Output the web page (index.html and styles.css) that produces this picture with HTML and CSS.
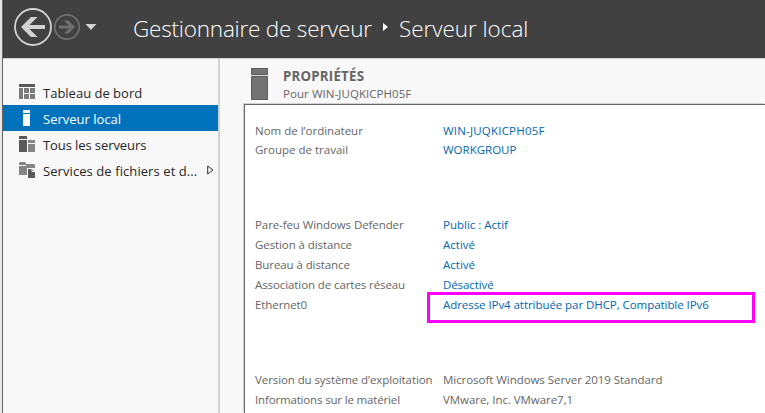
FILE: index.html
```html
<!DOCTYPE html>
<html lang="fr">
<head>
<meta charset="utf-8">
<title>Gestionnaire de serveur</title>
<link rel="stylesheet" href="styles.css">
</head>
<body>
<div class="window">
  <header class="header">
    <svg class="nav" width="98" height="58" viewBox="0 0 98 58">
      <circle cx="30" cy="27" r="18" fill="none" stroke="#d2d2d2" stroke-width="1.8"/>
      <path d="M18 27 L28 17 H34.5 L26.5 25 H42 V29 H26.5 L34.5 37 H28 Z" fill="#d2d2d2"/>
      <circle cx="64" cy="27" r="12.2" fill="none" stroke="#707070" stroke-width="1.7"/>
      <path d="M72 27 L65.5 20.5 H61 L66 25.5 H56 V28.5 H66 L61 33.5 H65.5 Z" fill="#707070"/>
      <path d="M82.5 24 H93.5 L88 30 Z" fill="#d2d2d2"/>
    </svg>
    <h1 class="title"><span class="crumb app">Gestionnaire de serveur</span><svg class="sep" width="5" height="8" viewBox="0 0 5 8"><path d="M0 0 L5 4 L0 8 Z" fill="#fff"/></svg><span class="crumb page">Serveur local</span></h1>
  </header>
  <div class="body">
    <nav class="sidebar">
      <a class="item"><svg width="16" height="16" viewBox="0 0 16 16"><path d="M0 0H16V3H0Z" fill="#595959"/><path d="M0 4H4V15H0ZM5 4H10V9H5ZM11 4H16V9H11ZM5 10H10V15H5ZM11 10H16V15H11Z" fill="#7b7b7b"/></svg><span>Tableau de bord</span></a>
      <a class="item active"><svg width="16" height="16" viewBox="0 0 16 16"><path d="M4 0H11V3H4ZM4 4H11V16H4Z" fill="#fff"/></svg><span>Serveur local</span></a>
      <a class="item"><svg width="16" height="16" viewBox="0 0 16 16"><path d="M0 0H8V3H0ZM0 4H8V16H0Z" fill="#595959"/><path d="M9 4H16V7H9ZM9 8H16V16H9Z" fill="#858585"/></svg><span class="snug">Tous les serveurs</span></a>
      <a class="item"><svg width="16" height="16" viewBox="0 0 16 16"><path d="M0 1L1 0H6L7 1V3H0ZM0 4H7V2H15L16 3V6H8V13H0Z" fill="#858585"/><path d="M9 7H13L16 10V16H9Z" fill="#595959"/><path d="M13 6.5V9.5H16" fill="none" stroke="#f8f8f8"/></svg><span class="services">Services de fichiers et d...</span><svg class="expand" width="7" height="10" viewBox="0 0 7 10"><path d="M.7 1 L6 5 L.7 9 Z" fill="none" stroke="#333"/></svg></a>
    </nav>
    <main class="main">
      <div class="heading">
        <svg width="17" height="32" viewBox="0 0 17 32"><path d="M.5 .5H16.5V6.5H.5ZM.5 8.5H16.5V31.5H.5Z" fill="#737373" stroke="#5c5c5c"/><path d="M0 7.5H17" stroke="#d8d8d8"/></svg>
        <div class="labels"><h2>PROPRIÉTÉS</h2><p class="host">Pour WIN-JUQKICPH05F</p></div>
      </div>
      <section class="panel">
        <dl class="group tight">
          <dt>Nom de l’ordinateur</dt><dd class="link wide">WIN-JUQKICPH05F</dd>
          <dt>Groupe de travail</dt><dd class="link">WORKGROUP</dd>
        </dl>
        <dl class="group">
          <dt class="snug">Pare-feu Windows Defender</dt><dd class="link">Public : Actif</dd>
          <dt class="snug">Gestion à distance</dt><dd class="link">Activé</dd>
          <dt class="snug">Bureau à distance</dt><dd class="link">Activé</dd>
          <dt class="snug">Association de cartes réseau</dt><dd class="link snug">Désactivé</dd>
          <dt class="snug">Ethernet0</dt><dd class="link marked">Adresse IPv4 attribuée par DHCP, Compatible IPv6</dd>
        </dl>
        <dl class="group">
          <dt class="snug">Version du système d’exploitation</dt><dd class="product">Microsoft Windows Server 2019 Standard</dd>
          <dt class="hardware">Informations sur le matériel</dt><dd class="product">VMware, Inc. VMware7,1</dd>
        </dl>
      </section>
    </main>
  </div>
</div>
</body>
</html>
```
FILE: styles.css
```css
*, *::after { box-sizing: border-box; }
body { margin: 0; overflow: hidden; background: #e8e8e8; font-family: "Open Sans", "Noto Sans", sans-serif; }
h1, h2, p, dl, dd { margin: 0; font-weight: 400; }
svg { display: block; flex: none; }
.window { height: 413px; margin-left: 2px; border-left: 1px solid #666; display: flex; flex-direction: column; background: #f8f8f8; }
.header { height: 59px; flex: none; display: flex; background: #414141; border-bottom: 1px solid #d0d0d0; }
.title { display: flex; align-items: center; height: 58px; padding-left: 32px; font-size: 22.5px; font-weight: 300; color: #fff; white-space: nowrap; }
.crumb { line-height: 30px; }
.app { width: 240px; letter-spacing: -.2px; }
.page { letter-spacing: -.05px; }
.sep { margin: 0 11px 4px 10px; }
.body { flex: 1; display: flex; min-height: 0; }
.sidebar { width: 217px; flex: none; padding-top: 20px; border-right: 2px solid #d2d2d2; }
.item { display: flex; align-items: center; height: 26px; padding-left: 16px; font-size: 13px; color: #262626; white-space: nowrap; }
.item span { margin-left: 8px; padding-top: 2px; line-height: 24px; }
.item.active { background: #0072bc; color: #fff; }
.item .services { width: 156px; letter-spacing: .08px; }
.expand { margin-left: 8px; }
.main { flex: 1; min-width: 0; padding: 9px 0 0 24px; display: flex; flex-direction: column; }
.heading { display: flex; height: 36px; flex: none; padding-left: 7px; }
.labels { margin-left: 15px; white-space: nowrap; color: #666; }
h2 { font-size: 13.3px; line-height: 17px; font-weight: 700; letter-spacing: .2px; }
.host { font-size: 11.5px; line-height: 17px; letter-spacing: .06px; }
.panel { flex: 1; border: solid #666; border-width: 1px 0 0 1px; box-shadow: -1px -1px #d2d2d2; background: #fff; padding: 16px 0 0 10px; }
.group { display: grid; grid-template-columns: 188px 1fr; grid-auto-rows: 20px; margin-bottom: 55px; font-size: 11.5px; line-height: 20px; color: #666; white-space: nowrap; }
.group.tight { grid-auto-rows: 19px; margin-bottom: 56px; }
.group:last-child { margin-bottom: 0; }
.link { color: #0067b0; }
.wide { letter-spacing: .2px; }
.snug { letter-spacing: -.09px; }
.product { letter-spacing: -.05px; }
.hardware { letter-spacing: -.16px; }
.marked { position: relative; letter-spacing: -.06px; }
.marked::after { content: ""; position: absolute; left: -16px; top: -3px; width: 328px; height: 31px; border: 3px solid #f0f; }
```
